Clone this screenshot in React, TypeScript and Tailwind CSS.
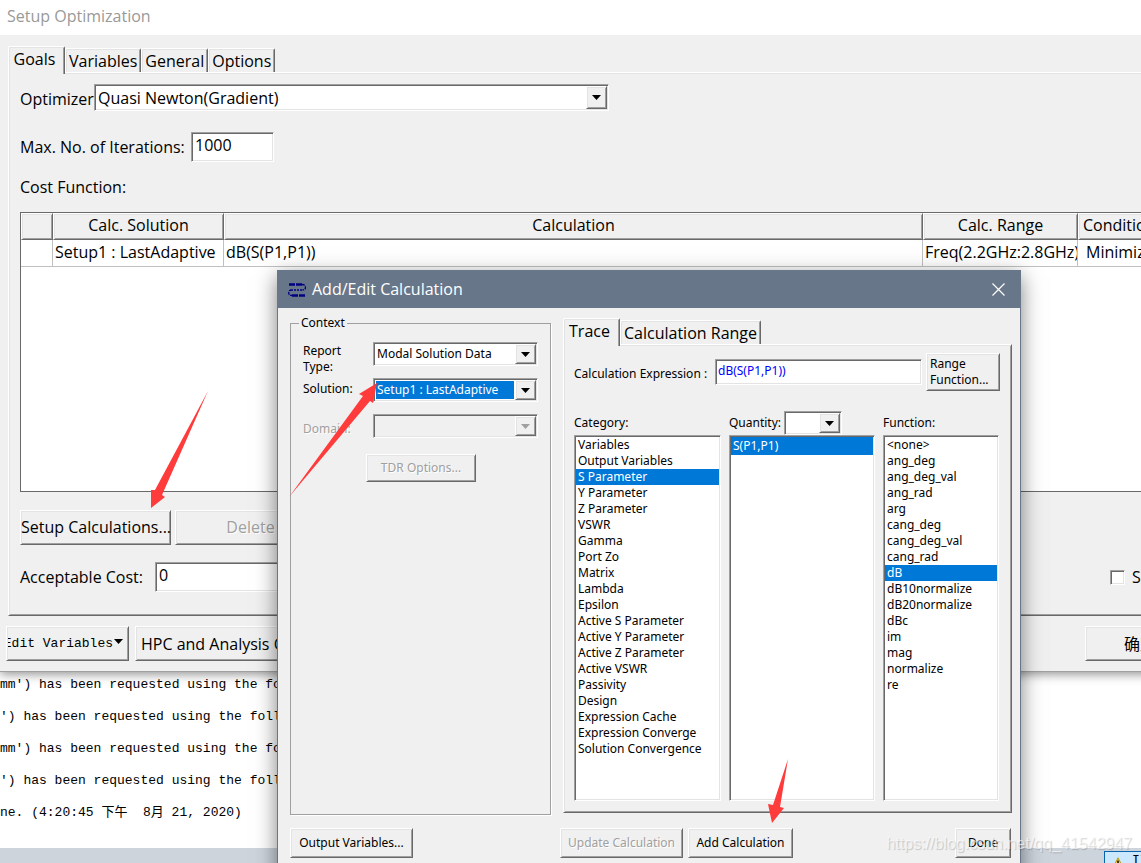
import type { ReactNode } from "react";
import { clsx } from "clsx";

const SUNKEN =
  "border border-t-[#a0a0a0] border-l-[#a0a0a0] border-r-white border-b-white shadow-[inset_1px_1px_0_#696969,inset_-1px_-1px_0_#e3e3e3]";
const RAISED =
  "border border-t-white border-l-white border-r-[#696969] border-b-[#696969] bg-[#f0f0f0] shadow-[inset_1px_1px_0_#e3e3e3,inset_-1px_-1px_0_#a0a0a0]";
const DISABLED_TEXT = "text-[#a0a0a0] [text-shadow:1px_1px_0_#fff]";
const LARGE_TEXT = "font-['Open_Sans','Noto_Sans_CJK_SC',sans-serif] text-[16px] leading-5";

function Button({
  children,
  className,
  disabled,
}: {
  children: ReactNode;
  className?: string;
  disabled?: boolean;
}) {
  return (
    <button
      type="button"
      disabled={disabled}
      className={clsx(RAISED, "shrink-0 whitespace-nowrap", disabled && DISABLED_TEXT, className)}
    >
      {children}
    </button>
  );
}

function Combo({
  id,
  value,
  className,
  label,
  disabled,
  focused,
}: {
  id: string;
  value: string;
  className?: string;
  label?: string;
  disabled?: boolean;
  focused?: boolean;
}) {
  return (
    <div className={clsx(SUNKEN, "flex p-px", disabled ? "bg-[#f0f0f0]" : "bg-white", className)}>
      <div className="flex min-w-0 flex-1 p-px">
        <select
          id={id}
          aria-label={label}
          disabled={disabled}
          defaultValue={value}
          className={clsx(
            "w-full min-w-0 appearance-none pl-px outline-none",
            focused && "bg-[#0078d7] text-white",
          )}
        >
          <option>{value}</option>
        </select>
      </div>
      <span className={clsx(RAISED, "flex w-[21px] shrink-0 items-center justify-center")}>
        <svg width="9" height="5" viewBox="0 0 9 5" aria-hidden="true">
          <path d="M0 0h9L4.5 5z" fill={disabled ? "#a0a0a0" : "#000"} />
        </svg>
      </span>
    </div>
  );
}

function Tabs({ items, activeClass }: { items: string[]; activeClass: string }) {
  return (
    <div role="tablist" className={clsx(LARGE_TEXT, "flex items-end")}>
      {items.map((item, i) => (
        <button
          key={item}
          type="button"
          role="tab"
          aria-selected={i === 0}
          className={clsx(
            "rounded-t-[2px] border border-b-0 border-t-white border-l-white border-r-[#696969] bg-[#f0f0f0] shadow-[inset_1px_1px_0_#e3e3e3,inset_-1px_0_0_#a0a0a0]",
            i === 0 ? clsx("relative z-10 -mb-[2px] h-7 pb-1", activeClass) : "h-6 px-[3px]",
          )}
        >
          {item}
        </button>
      ))}
    </div>
  );
}

function ListBox({
  label,
  items,
  selected,
  rowClass,
}: {
  label: string;
  items: string[];
  selected: string;
  rowClass: string;
}) {
  return (
    <ul role="listbox" aria-label={label} className={clsx(SUNKEN, "h-[366px] bg-white p-px")}>
      {items.map((item) => (
        <li
          key={item}
          role="option"
          aria-selected={item === selected}
          className={clsx(rowClass, "pl-0.5", item === selected && "bg-[#0078d7] text-white")}
        >
          {item}
        </li>
      ))}
    </ul>
  );
}

const CATEGORIES = [
  "Variables",
  "Output Variables",
  "S Parameter",
  "Y Parameter",
  "Z Parameter",
  "VSWR",
  "Gamma",
  "Port Zo",
  "Matrix",
  "Lambda",
  "Epsilon",
  "Active S Parameter",
  "Active Y Parameter",
  "Active Z Parameter",
  "Active VSWR",
  "Passivity",
  "Design",
  "Expression Cache",
  "Expression Converge",
  "Solution Convergence",
];

const FUNCTIONS = [
  "<none>",
  "ang_deg",
  "ang_deg_val",
  "ang_rad",
  "arg",
  "cang_deg",
  "cang_deg_val",
  "cang_rad",
  "dB",
  "dB10normalize",
  "dB20normalize",
  "dBc",
  "im",
  "mag",
  "normalize",
  "re",
];

const LOG = [
  "mm') has been requested using the following",
  "') has been requested using the following",
  "mm') has been requested using the following",
  "') has been requested using the following",
  "ne. (4:20:45 下午  8月 21, 2020)",
];

const COLUMNS = ["", "Calc. Solution", "Calculation", "Calc. Range", "Condition"];

function SetupWindow() {
  return (
    <section
      aria-label="Setup Optimization"
      className={clsx(
        LARGE_TEXT,
        "relative w-[calc(100%+200px)] shrink-0 border-b border-[#a0a0a0] bg-[#f0f0f0] shadow-[0_2px_10px_rgba(0,0,0,0.45)]",
      )}
    >
      <h1 className="flex h-[35px] items-center bg-white pb-1 pl-[7px] text-[#999]">Setup Optimization</h1>
      <div className="px-2 pt-[11px]">
        <Tabs items={["Goals", "Variables", "General", "Options"]} activeClass="w-[57px] pr-1" />
        <div className={clsx(RAISED, "pt-[11px] pr-[11px] pb-[23px] pl-[11px]")}>
          <div className="flex items-center">
            <label htmlFor="optimizer" className="w-[74px] pt-0.5">
              Optimizer:
            </label>
            <Combo id="optimizer" value="Quasi Newton(Gradient)" className="relative h-[27px] w-[515px]" />
          </div>
          <div className="mt-[21px] flex items-center">
            <label htmlFor="iterations" className="w-[171px]">
              Max. No. of Iterations:
            </label>
            <input
              id="iterations"
              defaultValue="1000"
              className={clsx(SUNKEN, "h-[30px] w-[83px] bg-white px-[3px] pb-1 outline-none")}
            />
          </div>
          <h2 className="mt-[15px]">Cost Function:</h2>
          <div className="mt-[15px] h-[280px] border border-[#696969] bg-white">
            <table className="w-full table-fixed border-separate border-spacing-0">
              <colgroup>
                <col className="w-8" />
                <col className="w-[171px]" />
                <col className="w-[699px]" />
                <col className="w-[155px]" />
                <col />
              </colgroup>
              <thead>
                <tr>
                  {COLUMNS.map((c, i) => (
                    <th
                      key={i}
                      className={clsx(
                        RAISED,
                        "h-[27px] p-0 pb-1 font-normal",
                        i === 4 && "pl-1 text-left",
                      )}
                    >
                      {c}
                    </th>
                  ))}
                </tr>
              </thead>
              <tbody>
                <tr className="[&>td]:h-[27px] [&>td]:overflow-hidden [&>td]:border-r [&>td]:border-b [&>td]:border-[#c0c0c0] [&>td]:pt-0 [&>td]:pr-0 [&>td]:pb-0.5 [&>td]:whitespace-nowrap">
                  <td />
                  <td className="pl-0.5">Setup1 : LastAdaptive</td>
                  <td className="pl-0.5">dB(S(P1,P1))</td>
                  <td className="pl-0.5">Freq(2.2GHz:2.8GHz)</td>
                  <td className="pl-2">Minimize</td>
                </tr>
              </tbody>
            </table>
          </div>
          <div className="mt-[18px] flex gap-1">
            <Button className="h-[35px] w-[151px] pb-0.5">Setup Calculations...</Button>
            <Button className="h-[35px] w-[151px] pb-0.5" disabled>
              Delete
            </Button>
          </div>
          <div className="mt-[17px] flex items-center">
            <label htmlFor="cost" className="w-[135px]">
              Acceptable Cost:
            </label>
            <input
              id="cost"
              defaultValue="0"
              className={clsx(SUNKEN, "h-[30px] w-[300px] bg-white px-[3px] pb-1 outline-none")}
            />
            <div className="ml-auto flex w-[211px] items-center gap-[7px]">
              <input
                id="advanced"
                type="checkbox"
                className={clsx(SUNKEN, "size-[15px] shrink-0 appearance-none bg-white")}
              />
              <label htmlFor="advanced">Show Advanced Option</label>
            </div>
          </div>
        </div>
      </div>
      <div className="mt-[10px] flex gap-[6px] px-[6px] pb-[10px]">
        <Button className="flex h-[35px] w-[123px] items-center gap-px pl-px">
          <span className="flex w-[105px] justify-end overflow-hidden font-['Liberation_Mono',monospace] text-[13px]">
            <span className="shrink-0">Edit Variables</span>
          </span>
          <svg width="9" height="5" viewBox="0 0 9 5" aria-hidden="true" className="mb-1">
            <path d="M0 0h9L4.5 5z" />
          </svg>
        </Button>
        <Button className="h-[35px] w-[240px] pl-[5px] text-left">HPC and Analysis Options...</Button>
        <div className="ml-auto w-[250px]">
          <Button className="h-[35px] w-[110px]">确定</Button>
        </div>
      </div>
    </section>
  );
}

function CalculationDialog() {
  return (
    <section
      role="dialog"
      aria-label="Add/Edit Calculation"
      className="absolute top-[270px] left-[277px] w-[744px] border border-[#687689] bg-[#f0f0f0] pb-6 text-[12px] leading-4 shadow-[0_6px_20px_rgba(0,0,0,0.5)]"
    >
      <header className="flex h-[37px] items-center bg-[#687689] pr-[15px] pl-[10px] text-white">
        <svg width="18" height="16" viewBox="0 0 18 16" fill="none" stroke="#000080" aria-hidden="true">
          <path d="M1 2.5h6M8 2.5h6M4 13.5h6M11 13.5h6" strokeWidth="2.5" />
          <path d="M14 2.5c2.500 0 3.500 1 3.500 2.800S16.500 8 14.500 8" strokeWidth="1.300" strokeDasharray="3 1" />
          <path d="M14 8H4" strokeWidth="1.300" strokeDasharray="2 1" />
          <path d="M4 8C1.500 8 .7 9 .7 10.800s.8 2.700 3.300 2.700" strokeWidth="1.300" strokeDasharray="3 1" />
        </svg>
        <h2 className={clsx(LARGE_TEXT, "ml-[6px] pb-0.5")}>Add/Edit Calculation</h2>
        <button type="button" aria-label="Close" className="ml-auto">
          <svg width="13" height="13" viewBox="0 0 13 13" stroke="currentColor" strokeWidth="1.200" aria-hidden="true">
            <path d="M.5.5l12 12M12.500.5l-12 12" />
          </svg>
        </button>
      </header>

      <div className="flex pt-[7px] pr-2 pl-3">
        <fieldset className="h-[500px] w-[260px] shrink-0 border border-[#a0a0a0] px-3 pt-[11px] shadow-[1px_1px_0_#fff]">
          <legend className="-ml-1 px-0.5">Context</legend>
          <div className="flex h-9 items-start">
            <label htmlFor="report" className="w-[70px] pt-px">
              Report
              <br />
              Type:
            </label>
            <Combo id="report" value="Modal Solution Data" className="h-6 w-[165px]" />
          </div>
          <div className="flex h-9 items-start">
            <label htmlFor="solution" className="w-[70px] pt-[3px]">
              Solution:
            </label>
            <Combo id="solution" value="Setup1 : LastAdaptive" className="h-6 w-[165px]" focused />
          </div>
          <div className="flex h-9 items-start">
            <label htmlFor="domain" className={clsx("w-[70px] pt-[7px]", DISABLED_TEXT)}>
              Domain:
            </label>
            <Combo id="domain" value="" className="h-6 w-[165px]" disabled />
          </div>
          <Button className="mt-1 ml-[63px] h-7 w-[110px]" disabled>
            TDR Options...
          </Button>
        </fieldset>

        <div className="mt-[3px] ml-3 min-w-0 flex-1">
          <Tabs items={["Trace", "Calculation Range"]} activeClass="w-[57px] pr-1" />
          <div className={clsx(RAISED, "pt-2 pr-[11px] pb-[11px] pl-[10px]")}>
            <div className="flex items-center">
              <label htmlFor="expression" className="w-[141px] pt-[3px]">
                Calculation Expression :
              </label>
              <input
                id="expression"
                defaultValue="dB(S(P1,P1))"
                className={clsx(
                  SUNKEN,
                  "h-[26px] min-w-0 flex-1 bg-white px-0.5 pb-1 text-[#0000ff] outline-none",
                )}
              />
              <Button className="ml-1 h-[38px] w-[74px] pl-[3px] text-left">
                Range
                <br />
                Function...
              </Button>
            </div>
            <div className="mt-5 grid grid-cols-[147px_146px_116px] gap-x-2">
              <div className="flex h-6 items-center">Category:</div>
              <div className="flex h-6 items-center gap-[3px]">
                <label htmlFor="quantity">Quantity:</label>
                <Combo id="quantity" value="" className="h-6 w-[58px]" />
              </div>
              <div className="flex h-6 items-center">Function:</div>
              <ListBox label="Category" items={CATEGORIES} selected="S Parameter" rowClass="h-4" />
              <ListBox label="Quantity" items={["S(P1,P1)"]} selected="S(P1,P1)" rowClass="h-[18px] pt-px" />
              <ListBox label="Function" items={FUNCTIONS} selected="dB" rowClass="h-4" />
            </div>
          </div>
        </div>
      </div>

      <footer className="mt-[13px] flex pr-[9px] pl-3">
        <Button className="h-[30px] w-[123px]">Output Variables...</Button>
        <Button className="ml-auto h-[30px] w-[123px]" disabled>
          Update Calculation
        </Button>
        <Button className="ml-[5px] h-[30px] w-[105px]">Add Calculation</Button>
        <Button className="ml-[162px] h-[30px] w-[56px]">Done</Button>
      </footer>
    </section>
  );
}

export default function App() {
  return (
    <main className="relative flex h-screen min-h-[863px] flex-col overflow-hidden bg-white font-['Noto_Sans','Noto_Sans_CJK_SC',sans-serif] text-black">
      <SetupWindow />
      <div className="flex flex-col gap-2 pt-px font-['Liberation_Mono','Noto_Sans_CJK_SC',monospace] text-[13px] leading-6">
        {LOG.map((line, i) => (
          <p key={i} className="h-6 whitespace-pre">
            {line}
          </p>
        ))}
      </div>
      <div className="mt-auto h-[15px] shrink-0 bg-[#cdd4dc]" />
      <div className="absolute right-0 bottom-0 flex h-3 w-[37px] items-start gap-2 overflow-hidden border-t border-l border-[#0a64ad] bg-[#cce8ff] pt-[5px] pl-[7px] font-['Liberation_Mono',monospace] text-[13px] leading-4">
        <svg width="12" height="12" viewBox="0 0 12 12" className="shrink-0" aria-hidden="true">
          <path d="M6 .8 11.500 11.500H.5z" fill="#ffe135" stroke="#b8960c" strokeLinejoin="round" />
          <path d="M6 3.500v4" stroke="#000" strokeWidth="1.500" />
        </svg>
        <span className="-mt-1">II</span>
      </div>
      <CalculationDialog />
      <svg
        width="1141"
        height="863"
        viewBox="0 0 1141 863"
        fill="#ff3b3b"
        aria-hidden="true"
        className="pointer-events-none absolute top-0 left-0"
      >
        <path d="M208 391 162 495l3 2-14 11v-18h4z" />
        <path d="M289 497 370 401l3 2 4-20-18 11 4 2z" />
        <path d="M788 759 780 807l4 1-12 15-4-19 5 1z" />
      </svg>
      <p className="pointer-events-none absolute right-[9px] bottom-[9px] font-['Liberation_Sans',sans-serif] text-[16px] leading-5 text-white/60 [text-shadow:1px_1px_1px_rgba(0,0,0,0.18)]">
        https://blog.csdn.net/qq_41542947
      </p>
    </main>
  );
}
